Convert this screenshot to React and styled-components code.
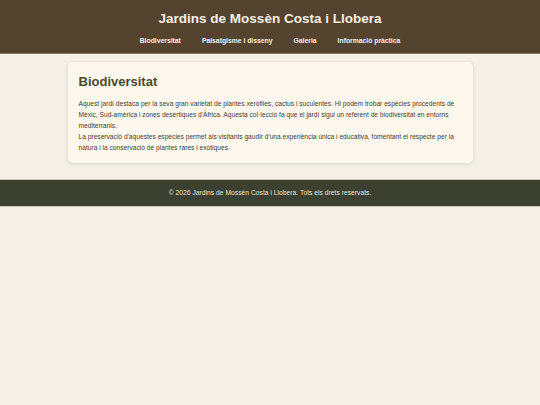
import React from "react";
import styled, {createGlobalStyle} from "styled-components";

const GlobalStyle = createGlobalStyle`
  html, body {
    margin: 0;
    padding: 0;
    background: #f5f0e6;
    font-family: "Liberation Sans", Arial, sans-serif;
  }
`;

const Header = styled.header`
  background: #54432f;
  border-bottom: 1px solid #8a7a66;
  padding: 11px 0 8px;
  text-align: center;
`;

const Title = styled.h1`
  margin: 0;
  color: #f5f0e6;
  font-size: 13.5px;
  font-weight: bold;
  line-height: 16px;
`;

const Nav = styled.nav`
  display: flex;
  justify-content: center;
  gap: 21px;
  margin-top: 10px;
`;

const NavLink = styled.a`
  color: #f5f0e6;
  font-size: 6.8px;
  font-weight: bold;
  text-decoration: none;
  line-height: 8px;
`;

const Main = styled.main`
  width: 75%;
  margin: 8px auto 16px;
`;

const Card = styled.section`
  background: #fdf7ee;
  border-radius: 5px;
  box-shadow: 0 1px 4px rgba(0, 0, 0, 0.12);
  padding: 11px 11px 10px;
`;

const CardTitle = styled.h2`
  margin: 0 0 7px;
  color: #4a4a2a;
  font-size: 13px;
  line-height: 18px;
`;

const Text = styled.p`
  margin: 0;
  color: #3e3e36;
  font-size: 6.65px;
  line-height: 11px;
`;

const Footer = styled.footer`
  background: #3b4030;
  border-top: 1px solid #c9c7b8;
  border-bottom: 1px solid #c9c7b8;
  color: #e6e4da;
  text-align: center;
  font-size: 6.75px;
  line-height: 8px;
  padding: 9px 0;
`;

const links = ["Biodiversitat", "Paisatgisme i disseny", "Galeria", "Informació pràctica"];

export default function App() {
    return (
        <>
            <GlobalStyle/>
            <Header>
                <Title>Jardins de Mossèn Costa i Llobera</Title>
                <Nav>
                    {links.map(l => <NavLink key={l} href="#">{l}</NavLink>)}
                </Nav>
            </Header>
            <Main>
                <Card>
                    <CardTitle>Biodiversitat</CardTitle>
                    <Text>
                        Aquest jardí destaca per la seva gran varietat de plantes xeròfiles, cactus i suculentes. Hi podem trobar espècies procedents de Mèxic, Sud-amèrica i zones desèrtiques d'Àfrica. Aquesta col·lecció fa que el jardí sigui un referent de biodiversitat en entorns mediterranis.
                    </Text>
                    <Text>
                        La preservació d'aquestes espècies permet als visitants gaudir d'una experiència única i educativa, fomentant el respecte per la natura i la conservació de plantes rares i exòtiques.
                    </Text>
                </Card>
            </Main>
            <Footer>© 2026 Jardins de Mossèn Costa i Llobera. Tots els drets reservats.</Footer>
        </>
    );
}
